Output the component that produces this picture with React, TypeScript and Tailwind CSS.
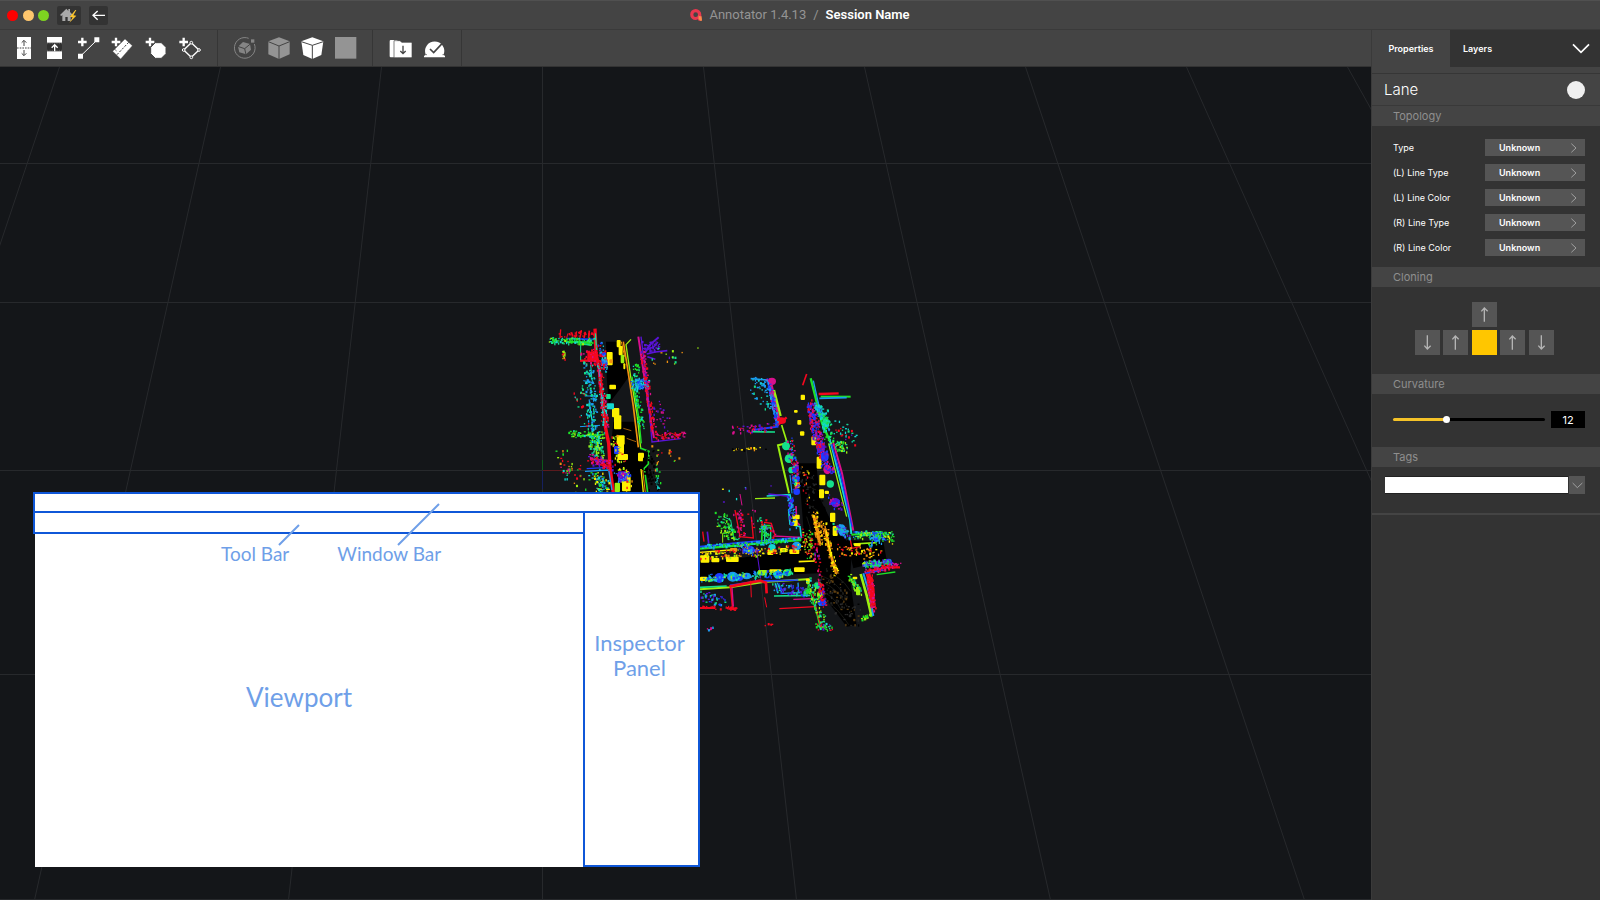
import { useState } from 'react';
import type { ReactNode } from 'react';

const RED = '#f5081e';
const MAGENTA = '#d8108c';
const PURPLE = '#5a14d8';
const BLUE = '#1c3cff';
const SKY = '#1a9cf0';
const CYAN = '#12d8d0';
const TEAL = '#14e08c';
const GREEN = '#1ee028';
const LIME = '#9cf010';
const YELLOW = '#fff000';
const ORANGE = '#f09010';

type Trail = {
  pts: number[][];
  colors: string[];
  spread: number;
  count: number;
};

type Line = [string, number, string];
type Block = [number, number, number, number, string];

// west street, 3 units per screen pixel
const westGround = [
  '228,95 285,95 300,195 268,240 236,282 230,200',
  '250,335 320,335 330,420 356,428 350,548 250,548 240,440',
];

const westLines: Line[] = [
  [RED, 10, '195,56 198,130 208,180 216,260 226,350 236,400 240,470 250,548'],
  [RED, 4, '92,58 90,84'],
  [RED, 3, '114,70 110,84'],
  [RED, 3, '128,72 126,84'],
  [RED, 4, '140,64 136,84'],
  [RED, 4, '154,60 150,84'],
  [RED, 5, '166,66 162,84'],
  [RED, 5, '178,62 176,84'],
  [RED, 7, '150,152 205,152'],
  [CYAN, 3, '205,160 214,250 222,340'],
  [BLUE, 5, '110,86 190,88'],
  [GREEN, 6, '108,95 186,97'],
  [TEAL, 6, '160,102 186,104'],
  [TEAL, 3, '152,100 152,150'],
  [TEAL, 4, '196,70 200,120'],
  [MAGENTA, 6, '180,448 234,452'],
  [SKY, 4, '165,484 236,480 246,540'],
  [BLUE, 4, '170,476 236,472'],
  [RED, 5, '200,462 240,470'],
  [CYAN, 3, '182,164 186,210 192,222'],
  [SKY, 3, '160,212 190,218'],
  [SKY, 3, '164,258 204,258'],
  [CYAN, 4, '178,280 186,330 196,330'],
  [SKY, 3, '150,350 210,346'],
  [GREEN, 4, '146,378 224,374'],
  [ORANGE, 5, '280,95 295,190 310,290 325,412'],
  [ORANGE, 3, '274,95 284,140'],
  [LIME, 4, '303,88 288,104 302,200 322,320 332,414'],
  [GREEN, 4, '306,200 326,320 334,400'],
  [GREEN, 5, '330,414 357,424 355,462 343,475 353,548'],
  [YELLOW, 4, '333,477 340,548'],
  [ORANGE, 3, '338,480 346,548'],
  [MAGENTA, 6, '325,80 340,180 352,260 362,330 372,384'],
  [PURPLE, 4, '333,80 352,230 366,396 452,386'],
  [RED, 3, '374,372 400,380 420,368 440,376 462,366'],
  [PURPLE, 6, '345,128 360,104 386,82'],
  [PURPLE, 4, '350,120 372,110 384,96'],
  [PURPLE, 5, '350,132 376,126 412,122'],
  [PURPLE, 5, '352,140 376,148'],
  [CYAN, 5, '380,508 384,536 390,534'],
  [ORANGE, 2, '280,355 304,362'],
  [ORANGE, 2, '290,385 318,395'],
];

const westBlocks: Block[] = [
  [230, 126, 18, 40, YELLOW],
  [238, 148, 10, 12, ORANGE],
  [238, 224, 20, 14, YELLOW],
  [246, 294, 22, 28, YELLOW],
  [252, 316, 22, 42, YELLOW],
  [260, 376, 24, 28, YELLOW],
  [264, 400, 18, 32, YELLOW],
  [262, 432, 32, 18, YELLOW],
  [324, 428, 18, 26, YELLOW],
  [260, 90, 12, 22, YELLOW],
  [266, 108, 12, 28, YELLOW],
  [272, 134, 11, 26, LIME],
  [280, 160, 6, 18, YELLOW],
  [276, 500, 26, 44, YELLOW],
  [254, 518, 16, 28, LIME],
  [172, 126, 30, 26, RED],
  [214, 126, 14, 12, BLUE],
  [214, 146, 18, 22, SKY],
  [228, 252, 14, 15, TEAL],
  [230, 280, 22, 18, CYAN],
  [264, 484, 24, 30, PURPLE],
  [252, 408, 16, 24, BLUE],
];

const westTrails: Trail[] = [
  { pts: [[60, 92], [190, 94]], colors: [GREEN, CYAN, TEAL, LIME], spread: 9, count: 90 },
  { pts: [[90, 75], [200, 70]], colors: [RED], spread: 8, count: 26 },
  { pts: [[170, 135], [206, 150]], colors: [RED, RED, MAGENTA], spread: 20, count: 60 },
  { pts: [[178, 170], [190, 360]], colors: [CYAN, SKY, TEAL, SKY], spread: 17, count: 120 },
  { pts: [[146, 220], [170, 340]], colors: [CYAN, TEAL, RED], spread: 18, count: 26 },
  { pts: [[208, 160], [226, 350]], colors: [RED, MAGENTA, CYAN, RED], spread: 9, count: 110 },
  { pts: [[120, 372], [225, 376]], colors: [GREEN, LIME, GREEN, CYAN], spread: 10, count: 70 },
  { pts: [[190, 380], [206, 440]], colors: [CYAN, TEAL, GREEN, LIME], spread: 18, count: 100 },
  { pts: [[180, 445], [245, 470]], colors: [MAGENTA, RED, PURPLE], spread: 14, count: 80 },
  { pts: [[190, 490], [226, 540]], colors: [CYAN, GREEN, YELLOW, SKY], spread: 18, count: 80 },
  { pts: [[96, 430], [150, 540]], colors: [LIME, GREEN, ORANGE, RED, CYAN], spread: 26, count: 34 },
  { pts: [[100, 126], [102, 150]], colors: [ORANGE, LIME, RED], spread: 4, count: 12 },
  { pts: [[210, 100], [226, 180]], colors: [CYAN, SKY, BLUE, RED], spread: 9, count: 50 },
  { pts: [[318, 160], [322, 260], [334, 350]], colors: [GREEN, CYAN, TEAL, GREEN], spread: 9, count: 80 },
  { pts: [[315, 225], [345, 222]], colors: [SKY, BLUE, SKY, CYAN], spread: 16, count: 90 },
  { pts: [[336, 120], [352, 230], [372, 370]], colors: [RED, MAGENTA, RED], spread: 7, count: 110 },
  { pts: [[380, 380], [460, 374]], colors: [RED, MAGENTA], spread: 10, count: 40 },
  { pts: [[374, 290], [408, 350]], colors: [PURPLE, MAGENTA], spread: 20, count: 24 },
  { pts: [[345, 110], [384, 110]], colors: [PURPLE], spread: 16, count: 40 },
  { pts: [[376, 142], [545, 120]], colors: [LIME, TEAL, PURPLE, ORANGE], spread: 30, count: 16 },
  { pts: [[380, 420], [440, 440]], colors: [ORANGE, LIME, GREEN, RED], spread: 20, count: 12 },
  { pts: [[378, 450], [386, 530]], colors: [CYAN, GREEN, ORANGE], spread: 7, count: 16 },
  { pts: [[246, 380], [300, 545]], colors: [YELLOW, LIME, ORANGE, RED], spread: 14, count: 60 },
  { pts: [[262, 500], [290, 500]], colors: [PURPLE, BLUE, SKY, MAGENTA], spread: 14, count: 50 },
  { pts: [[350, 425], [372, 540]], colors: ['#000000'], spread: 18, count: 60 },
  { pts: [[75, 460], [160, 490]], colors: [RED, MAGENTA], spread: 24, count: 10 },
];

// east street and the crossing below it
const eastGround = [
  '325,310 378,310 392,420 432,500 486,560 480,660 500,796 470,800 410,720 385,640 30,655 30,610 330,570 340,500',
  '470,540 580,545 590,600 490,625',
  '372,440 405,440 440,620 480,650 470,770 430,740 400,700',
];

const eastLines: Line[] = [
  [BLUE, 6, '232,55 262,200 190,210'],
  [MAGENTA, 7, '240,55 270,188'],
  [SKY, 5, '182,56 232,60'],
  [LIME, 7, '252,90 272,168'],
  [LIME, 5, '275,195 290,244'],
  [TEAL, 5, '185,215 255,216'],
  [RED, 7, '262,196 290,172'],
  [LIME, 6, '290,250 264,256 276,310 297,400'],
  [SKY, 3, '300,345 306,400'],
  [CYAN, 5, '230,408 300,404 306,440 296,450 300,492 330,500 334,535'],
  [LIME, 4, '195,416 255,414'],
  [PURPLE, 4, '235,402 292,408 308,430'],
  [MAGENTA, 5, '318,438 320,486 330,496'],
  [GREEN, 7, '362,55 376,110 396,190 420,244'],
  [SKY, 4, '370,62 394,170'],
  [RED, 7, '386,102 446,100'],
  [GREEN, 6, '392,110 482,110'],
  [SKY, 5, '388,115 470,113'],
  [CYAN, 6, '422,246 448,350 480,480 484,522'],
  [LIME, 4, '416,250 440,350 470,470'],
  [MAGENTA, 6, '430,248 456,340 490,512'],
  [BLUE, 4, '424,250 452,345 486,500'],
  [GREEN, 6, '484,524 575,516'],
  [BLUE, 5, '490,516 580,520'],
  [TEAL, 4, '495,530 550,524'],
  [RED, 4, '480,535 486,565 510,560'],
  [LIME, 5, '490,552 560,548'],
  [GREEN, 7, '30,566 150,556 240,546 334,540'],
  [BLUE, 5, '30,560 150,548 334,532'],
  [MAGENTA, 4, '250,528 334,532'],
  [YELLOW, 4, '30,577 120,570'],
  [RED, 4, '135,450 150,530 190,534 184,470'],
  [RED, 4, '222,487 244,490 256,530'],
  [GREEN, 5, '215,545 217,497 242,497'],
  [TEAL, 4, '224,545 224,505 242,503 242,535'],
  [LIME, 3, '98,548 98,520 118,516'],
  [TEAL, 3, '100,470 122,480 132,540'],
  [PURPLE, 5, '52,515 56,550'],
  [RED, 4, '38,515 42,545'],
  [LIME, 6, '30,688 120,682 220,666 350,658'],
  [TEAL, 5, '30,682 110,678'],
  [BLUE, 5, '120,676 200,664 325,660'],
  [RED, 8, '118,680 210,662 228,668 230,700'],
  [RED, 5, '122,682 128,745'],
  [MAGENTA, 4, '126,684 130,740'],
  [RED, 3, '182,662 184,712'],
  [RED, 3, '224,712 230,742'],
  [PURPLE, 3, '200,570 212,655'],
  [SKY, 4, '262,668 276,700 326,698 324,668'],
  [TEAL, 5, '252,708 360,706'],
  [CYAN, 5, '256,670 264,700'],
  [MAGENTA, 4, '310,718 370,716'],
  [RED, 4, '268,746 375,740'],
  [RED, 6, '30,744 76,744'],
  [RED, 7, '115,746 140,746'],
  [GREEN, 4, '350,658 362,700 380,760 392,808'],
  [RED, 3, '368,700 390,790'],
  [ORANGE, 9, '372,470 388,540'],
  [ORANGE, 8, '405,505 416,560 436,634'],
  [YELLOW, 4, '408,510 424,590'],
  [YELLOW, 5, '326,605 374,603'],
  [LIME, 8, '512,642 530,706 545,770'],
  [SKY, 6, '520,640 538,700 550,768'],
  [RED, 14, '534,640 546,690 548,735'],
  [RED, 7, '530,636 590,622 630,622'],
  [BLUE, 5, '524,640 580,630'],
  [GREEN, 4, '560,644 616,636'],
  [LIME, 4, '516,612 600,606'],
  [RED, 5, '350,42 338,76'],
  [MAGENTA, 3, '150,402 156,436'],
];

const eastBlocks: Block[] = [
  [332, 104, 13, 16, YELLOW],
  [322, 180, 12, 14, YELLOW],
  [330, 214, 13, 13, YELLOW],
  [312, 150, 11, 8, YELLOW],
  [364, 230, 15, 26, YELLOW],
  [380, 290, 15, 36, YELLOW],
  [388, 344, 18, 32, YELLOW],
  [387, 388, 15, 27, YELLOW],
  [404, 392, 13, 10, YELLOW],
  [420, 458, 16, 28, YELLOW],
  [428, 498, 15, 30, YELLOW],
  [307, 464, 22, 14, YELLOW],
  [308, 480, 15, 18, YELLOW],
  [314, 366, 15, 17, YELLOW],
  [32, 586, 26, 22, YELLOW],
  [64, 594, 24, 13, YELLOW],
  [108, 590, 38, 16, YELLOW],
  [120, 564, 22, 10, ORANGE],
  [232, 570, 18, 15, YELLOW],
  [270, 564, 20, 13, YELLOW],
  [298, 568, 30, 14, YELLOW],
  [204, 630, 28, 15, LIME],
  [238, 628, 36, 10, YELLOW],
  [312, 622, 32, 14, YELLOW],
  [30, 650, 22, 13, YELLOW],
  [348, 655, 12, 16, YELLOW],
  [498, 680, 13, 26, LIME],
  [488, 650, 14, 8, YELLOW],
  [492, 550, 20, 9, YELLOW],
  [518, 606, 14, 14, LIME],
];

const eastBlobs: Block[] = [
  [288, 258, 12, 13, TEAL],
  [297, 296, 13, 13, TEAL],
  [304, 330, 9, 10, TEAL],
  [317, 356, 12, 11, BLUE],
  [317, 325, 10, 14, PURPLE],
  [320, 395, 10, 10, BLUE],
  [412, 328, 12, 14, MAGENTA],
  [421, 372, 11, 11, TEAL],
  [436, 428, 13, 14, PURPLE],
  [456, 510, 12, 17, SKY],
  [404, 290, 12, 15, BLUE],
  [392, 262, 13, 17, PURPLE],
  [408, 190, 10, 18, TEAL],
  [88, 654, 15, 15, BLUE],
  [128, 650, 17, 15, SKY],
  [148, 652, 12, 11, BLUE],
  [170, 648, 13, 10, SKY],
  [60, 658, 9, 8, TEAL],
  [264, 644, 14, 12, SKY],
  [292, 638, 14, 11, TEAL],
  [180, 570, 14, 13, BLUE],
  [246, 562, 11, 10, CYAN],
  [320, 558, 14, 13, SKY],
  [384, 676, 12, 11, TEAL],
  [390, 704, 9, 11, LIME],
  [396, 728, 13, 10, BLUE],
  [350, 694, 8, 10, GREEN],
  [560, 534, 12, 11, SKY],
  [556, 612, 12, 10, TEAL],
  [596, 606, 10, 10, BLUE],
  [246, 64, 12, 11, MAGENTA],
  [274, 182, 14, 10, RED],
];

const eastTrails: Trail[] = [
  { pts: [[196, 58], [228, 70], [240, 140]], colors: [SKY, CYAN, SKY], spread: 10, count: 50 },
  { pts: [[190, 90], [220, 130]], colors: [CYAN, SKY, TEAL], spread: 22, count: 18 },
  { pts: [[236, 60], [262, 190]], colors: [BLUE, MAGENTA, SKY], spread: 6, count: 80 },
  { pts: [[135, 212], [262, 198]], colors: [RED, MAGENTA, PURPLE], spread: 13, count: 50 },
  { pts: [[124, 268], [235, 264]], colors: [ORANGE, YELLOW, '#000000'], spread: 4, count: 20 },
  { pts: [[296, 240], [314, 320], [322, 400]], colors: [RED, MAGENTA, BLUE, TEAL], spread: 11, count: 90 },
  { pts: [[364, 130], [376, 210], [400, 290]], colors: [MAGENTA, PURPLE, BLUE, RED], spread: 14, count: 250 },
  { pts: [[382, 130], [410, 210]], colors: [CYAN, SKY, TEAL], spread: 9, count: 80 },
  { pts: [[400, 150], [420, 240]], colors: [TEAL, GREEN, CYAN], spread: 16, count: 50 },
  { pts: [[430, 255], [470, 262]], colors: [TEAL, GREEN, LIME], spread: 15, count: 44 },
  { pts: [[440, 190], [485, 240]], colors: [TEAL, RED, CYAN, PURPLE], spread: 20, count: 30 },
  { pts: [[402, 310], [424, 335]], colors: [MAGENTA, PURPLE, BLUE], spread: 12, count: 36 },
  { pts: [[424, 415], [448, 440]], colors: [PURPLE, BLUE, MAGENTA], spread: 12, count: 40 },
  { pts: [[440, 500], [470, 525]], colors: [SKY, PURPLE, TEAL], spread: 12, count: 44 },
  { pts: [[346, 320], [350, 430]], colors: [ORANGE, RED, YELLOW], spread: 10, count: 16 },
  { pts: [[300, 410], [310, 500]], colors: [BLUE, SKY, PURPLE], spread: 10, count: 60 },
  { pts: [[92, 470], [130, 545]], colors: [GREEN, TEAL, LIME, GREEN], spread: 18, count: 70 },
  { pts: [[140, 450], [160, 530]], colors: [RED, MAGENTA], spread: 12, count: 36 },
  { pts: [[180, 460], [250, 520]], colors: [RED, TEAL, MAGENTA], spread: 20, count: 26 },
  { pts: [[218, 500], [240, 540]], colors: [TEAL, SKY, GREEN], spread: 12, count: 44 },
  { pts: [[40, 560], [180, 552], [330, 538]], colors: [SKY, CYAN, GREEN], spread: 6, count: 120 },
  { pts: [[32, 585], [180, 580], [340, 562]], colors: [YELLOW, ORANGE, RED, LIME], spread: 12, count: 120 },
  { pts: [[40, 655], [180, 646], [300, 638]], colors: [SKY, BLUE, CYAN, LIME, TEAL], spread: 11, count: 150 },
  { pts: [[150, 560], [200, 575]], colors: [PURPLE, SKY, BLUE, ORANGE], spread: 12, count: 50 },
  { pts: [[350, 520], [360, 590]], colors: [LIME, ORANGE, RED, GREEN], spread: 14, count: 60 },
  { pts: [[374, 460], [392, 560]], colors: [ORANGE, YELLOW, ORANGE], spread: 9, count: 70 },
  { pts: [[400, 490], [438, 640]], colors: [ORANGE, YELLOW, ORANGE], spread: 9, count: 80 },
  { pts: [[376, 550], [390, 660], [404, 740]], colors: [RED, PURPLE, MAGENTA, RED], spread: 8, count: 70 },
  { pts: [[356, 660], [400, 800]], colors: [GREEN, TEAL, LIME, CYAN], spread: 13, count: 80 },
  { pts: [[384, 800], [420, 804]], colors: [GREEN, TEAL, RED, PURPLE], spread: 9, count: 34 },
  { pts: [[446, 570], [560, 585]], colors: [ORANGE, RED, ORANGE, YELLOW], spread: 18, count: 60 },
  { pts: [[500, 525], [600, 525]], colors: [GREEN, SKY, TEAL, LIME], spread: 12, count: 70 },
  { pts: [[545, 548], [576, 528]], colors: [SKY, BLUE, GREEN], spread: 14, count: 50 },
  { pts: [[520, 612], [606, 606]], colors: [TEAL, SKY, GREEN, PURPLE], spread: 9, count: 100 },
  { pts: [[530, 634], [630, 614]], colors: [RED, MAGENTA], spread: 8, count: 56 },
  { pts: [[538, 650], [550, 745]], colors: [RED, RED, MAGENTA], spread: 9, count: 110 },
  { pts: [[595, 520], [610, 548]], colors: [GREEN, YELLOW], spread: 10, count: 16 },
  { pts: [[30, 705], [110, 730]], colors: [SKY, BLUE, PURPLE, TEAL], spread: 14, count: 44 },
  { pts: [[30, 744], [140, 746]], colors: [RED], spread: 7, count: 26 },
  { pts: [[480, 650], [510, 700]], colors: [LIME, TEAL, GREEN], spread: 9, count: 44 },
  { pts: [[515, 775], [550, 765]], colors: [GREEN, LIME], spread: 6, count: 20 },
  { pts: [[260, 680], [350, 700]], colors: [TEAL, SKY, PURPLE, BLUE], spread: 14, count: 80 },
  { pts: [[55, 808], [66, 804]], colors: [SKY, MAGENTA], spread: 4, count: 8 },
  { pts: [[215, 795], [255, 793]], colors: [RED], spread: 3, count: 5 },
  { pts: [[90, 410], [260, 365]], colors: [YELLOW, PURPLE, CYAN], spread: 20, count: 7 },
  { pts: [[400, 640], [490, 780]], colors: ['#242420', '#000000', '#2c2c2c', '#604010'], spread: 28, count: 120 },
  { pts: [[345, 330], [380, 450]], colors: ['#222426', '#000000'], spread: 22, count: 60 },
];

function random(seed: number) {
  let s = seed;
  return () => {
    s = (s * 16807) % 2147483647;
    return s / 2147483647;
  };
}

function scatter(trails: Trail[], seed: number) {
  const next = random(seed);
  return trails.flatMap(({ pts, colors, spread, count }) =>
    Array.from({ length: count }, () => {
      const at = next() * (pts.length - 1);
      const i = Math.min(Math.floor(at), pts.length - 2);
      const t = at - i;
      const [x1, y1] = pts[i];
      const [x2, y2] = pts[i + 1];
      return {
        x: x1 + (x2 - x1) * t + (next() * 2 - 1) * spread - 2,
        y: y1 + (y2 - y1) * t + (next() * 2 - 1) * spread - 2,
        w: next() > 0.6 ? 6 : 4,
        h: next() > 0.6 ? 7 : 4,
        fill: colors[Math.floor(next() * colors.length)],
      };
    })
  );
}

const westDots = scatter(westTrails, 4211);
const eastDots = scatter(eastTrails, 977);

function Lines({ lines }: { lines: Line[] }) {
  return (
    <>
      {lines.map(([color, width, points], i) => (
        <polyline key={i} points={points} stroke={color} strokeWidth={width} fill="none" />
      ))}
    </>
  );
}

function Blocks({ blocks }: { blocks: Block[] }) {
  return (
    <>
      {blocks.map(([x, y, w, h, fill], i) => (
        <rect key={i} x={x} y={y} width={w} height={h} rx={3} fill={fill} />
      ))}
    </>
  );
}

function Dots({ dots }: { dots: ReturnType<typeof scatter> }) {
  return (
    <>
      {dots.map((d, i) => (
        <rect key={i} x={d.x} y={d.y} width={d.w} height={d.h} fill={d.fill} />
      ))}
    </>
  );
}

function Scene() {
  return (
    <svg
      className="absolute inset-0 h-full w-full"
      viewBox="0 67 1371 833"
      preserveAspectRatio="xMinYMin slice"
      aria-hidden="true"
    >
      <g stroke="#27292c" strokeWidth="1">
        {[163.5, 302.5, 470.5, 674.5, 899.5].map((y) => (
          <line key={y} x1="0" x2="2400" y1={y} y2={y} />
        ))}
        {[-3, -2, -1, 0, 1, 2, 3, 4, 5, 6, 7, 8].map((k) => (
          <line key={k} x1={542.5 + k * 161} y1="67" x2={542.5 + k * 254} y2="900" />
        ))}
      </g>
      <path d="M542.5 460v10" stroke="#0d5a1c" />
      <path d="M543 470.5h20" stroke="#5a1a1e" />
      <path d="M542.5 471v18" stroke="#16205e" />

      <g transform="translate(530 310) scale(0.33333)">
        {westGround.map((points) => (
          <polygon key={points} points={points} fill="#000" />
        ))}
        <Lines lines={westLines} />
        <Blocks blocks={westBlocks} />
        <Dots dots={westDots} />
      </g>

      <g transform="translate(690 360) scale(0.33333)">
        {eastGround.map((points) => (
          <polygon key={points} points={points} fill="#000" />
        ))}
        <g stroke="#24251f" strokeWidth="2" fill="none">
          <path d="M400 650q30 10 60 50M405 670q30 14 56 52M408 700q26 14 46 50M430 740q20 16 46 54M336 340q16 12 36 18M338 370q18 12 40 20M345 430q20 8 40 24M440 650q24 14 42 44M350 470q12 30 14 60" />
        </g>
        <Lines lines={eastLines} />
        <Blocks blocks={eastBlocks} />
        {eastBlobs.map(([cx, cy, rx, ry, fill], i) => (
          <ellipse key={i} cx={cx} cy={cy} rx={rx} ry={ry} fill={fill} />
        ))}
        <Dots dots={eastDots} />
      </g>
    </svg>
  );
}

function ToolButton({ label, children }: { label: string; children: ReactNode }) {
  return (
    <button type="button" aria-label={label} className="flex h-full w-[33px] items-center justify-center">
      <svg className="h-6 w-[33px]" viewBox="0 0 99 72" fill="#fff">
        {children}
      </svg>
    </button>
  );
}

function Plus({ x }: { x: number }) {
  return <path d={`M${x - 13} 18h26M${x} 5v26`} stroke="#fff" strokeWidth="7" fill="none" />;
}

function WindowBar() {
  return (
    <header className="flex h-[30px] shrink-0 items-center border-t border-b border-t-[#505050] border-b-[#3a3a3a] bg-[#444]">
      <div className="flex flex-1 items-center">
        <div className="flex gap-1 pl-[7px]">
          <button type="button" aria-label="Close" className="h-[11px] w-[11px] rounded-full bg-[#fe0000]" />
          <button type="button" aria-label="Minimize" className="ml-px h-[11px] w-[11px] rounded-full bg-[#fdc66d]" />
          <button type="button" aria-label="Zoom" className="h-[11px] w-[11px] rounded-full bg-[#7ed321]" />
        </div>
        <button type="button" aria-label="Home" className="ml-2 rounded-xs bg-[#333]">
          <svg className="h-[19px] w-6" viewBox="0 0 72 57">
            <path d="M28 8 9 27l4 3 3-3v18h9V33h7v12h9V27l4 3 3-3-9-9V9h-5v6z" fill="#a9a9a9" />
            <path d="M55 12 38 33l9 1-10 16 21-21-9-1 9-16z" fill="#fdc62f" />
          </svg>
        </button>
        <button type="button" aria-label="Back" className="ml-2 rounded-xs bg-[#333]">
          <svg className="h-[19px] w-[19px]" viewBox="0 0 57 57" fill="none" stroke="#fff" strokeWidth="4">
            <path d="M48 28H13M26 15 12 28l14 13" />
          </svg>
        </button>
      </div>
      <h1 className="flex items-center font-[Roboto,sans-serif] text-[13px]">
        <svg className="mr-[7px] h-3 w-3" viewBox="0 0 36 36" aria-hidden="true">
          <path
            fillRule="evenodd"
            d="M17 0a17 17 0 0 1 17 17v18h-8l-3-4a15 15 0 0 1-6 2A16 16 0 0 1 17 0zm0 10a7 7 0 1 0 0 14 7 7 0 0 0 0-14z"
            fill="#e8384f"
          />
          <path d="M24 19c2 3 2 6 1 9l5 7h6c0-6-1-10-2-14-3 2-7 1-10-2z" fill="#fb8a4c" />
        </svg>
        <span className="text-[#949494]">Annotator 1.4.13</span>
        <span className="mx-[7px] text-[#949494]">/</span>
        <span className="font-semibold text-white">Session Name</span>
      </h1>
      <div className="flex-1" />
    </header>
  );
}

function ToolBar() {
  return (
    <div className="flex h-[37px] shrink-0 border-b border-[#333] bg-[#444]">
      <div className="flex border-r border-[#363636] pr-[11px] pl-2">
        <ToolButton label="Lane both ways">
          <path d="M27 3h42v66H27z" />
          <path d="M27 36h42" stroke="#444" strokeWidth="3" strokeDasharray="5 3" />
          <path d="M48 30V14M41 20l7-7 7 7M48 42v16M41 52l7 7 7-7" stroke="#444" strokeWidth="3" fill="none" />
        </ToolButton>
        <ToolButton label="Lane one way">
          <path d="M18 3h45v66H18z" />
          <path d="M18 20h45v26H18z" fill="#303030" />
          <path d="M18 23h45M18 43h45" stroke="#777" strokeWidth="2" strokeDasharray="4 3" />
          <path d="M41 46V27M32 35l9-9 9 9" stroke="#fff" strokeWidth="4" fill="none" />
        </ToolButton>
        <ToolButton label="Add line">
          <Plus x={25} />
          <path d="M20 60 69 12" stroke="#fff" strokeWidth="3" />
          <path d="M61 4h15v15H61zM12 53h15v15H12z" />
        </ToolButton>
        <ToolButton label="Add road">
          <Plus x={27} />
          <path d="M54 9 76 29 41 69 17 46z" stroke="#444" strokeWidth="1" />
          <path d="M65 19 29 57" stroke="#444" strokeWidth="3" strokeDasharray="7 4" />
          <path d="m21 38 8 7M63 43l6 6" stroke="#444" strokeWidth="2" />
        </ToolButton>
        <ToolButton label="Add area">
          <Plus x={30} />
          <path
            d="m46 20 18 0 14 14v19L64 67H46L32 53V34z"
            stroke="#444"
            strokeWidth="3"
            strokeLinejoin="round"
          />
        </ToolButton>
        <ToolButton label="Add polygon">
          <Plus x={32} />
          <path d="m55 20 23 22-23 22-23-22z" fill="none" stroke="#fff" strokeWidth="4" />
          <g fill="#444" stroke="#fff" strokeWidth="3">
            <circle cx="55" cy="20" r="4" />
            <circle cx="78" cy="42" r="4" />
            <circle cx="55" cy="64" r="4" />
            <circle cx="32" cy="42" r="4" />
          </g>
        </ToolButton>
      </div>
      <div className="flex border-r border-[#363636] pr-3 pl-[10px]">
        <ToolButton label="Orbit">
          <path d="M62 7A31 31 0 1 0 79 24" fill="none" stroke="#858585" strokeWidth="3" />
          <path d="M69 10h10v10H69z" fill="#858585" />
          <path d="m45 18 21 6 3 17-15 14-20-6-4-17z" fill="#858585" />
          <path d="m29 31 21 7 17-14M50 38l4 18" fill="none" stroke="#444" strokeWidth="3" />
        </ToolButton>
        <ToolButton label="Solid cube">
          <path d="m54 4 32 12v39L54 69 22 55V16z" fill="#949494" />
          <path d="m22 17 32 13 32-13M54 30v39" fill="none" stroke="#444" strokeWidth="3" />
        </ToolButton>
        <ToolButton label="Perspective">
          <path d="m55 4 33 12-6 41-27 12-27-12-6-41z" />
          <path d="m22 17 33 11 33-11M55 28v41" fill="none" stroke="#444" strokeWidth="3" />
        </ToolButton>
        <ToolButton label="Flat">
          <path d="M24 3h64v65H24z" fill="#949494" />
        </ToolButton>
      </div>
      <div className="flex border-r border-[#363636] px-[11px]">
        <ToolButton label="Import">
          <path d="M20 12h19l3 4v48H20q-3 0-3-3V15q0-3 3-3z" />
          <path d="M30 14h18l5 5h28q3 0 3 3v40q0 3-3 3H30z" stroke="#444" strokeWidth="2" />
          <path d="M57 29v23M49 45l8 8 8-8" fill="none" stroke="#444" strokeWidth="4" />
        </ToolButton>
        <ToolButton label="Validate">
          <path d="M26 56a29 29 0 1 1 54 0l4 4v4H21v-4z" />
          <path d="m39 39 11 11 25-27" fill="none" stroke="#444" strokeWidth="5" />
          <path d="M26 56h3M77 56h3" stroke="#444" strokeWidth="3" />
        </ToolButton>
      </div>
    </div>
  );
}

// miniature of the window that names its four areas
function LayoutGuide() {
  return (
    <div className="absolute bottom-[33px] left-[33px] flex h-[375px] w-[667px] flex-col font-[Lato,sans-serif] text-[#6f9fe8]">
      <div className="h-[21px] border-2 border-[#0f57d8] bg-white" />
      <div className="flex flex-1">
        <div className="flex flex-1 flex-col">
          <div className="h-[21px] border-b-2 border-l-2 border-[#0f57d8] bg-white" />
          <div className="ml-[2px] flex flex-1 flex-col bg-white">
            <div className="flex gap-12 pt-2 pl-[186px] text-[19px] leading-6">
              <span>Tool Bar</span>
              <span>Window Bar</span>
            </div>
            <p className="mt-[115px] pr-5 text-center text-[26px] leading-8">Viewport</p>
          </div>
        </div>
        <div className="w-[117px] border-r-2 border-b-2 border-l-2 border-[#0f57d8] bg-white pt-[117px] pr-1 text-center text-[22px] leading-[25px]">
          Inspector
          <br />
          Panel
        </div>
      </div>
      <svg className="absolute top-0 left-0 h-16 w-[440px]" viewBox="0 0 440 64" aria-hidden="true">
        <path d="m266 33-20 20M406 12l-41 41" stroke="#6f9fe8" strokeWidth="2" />
      </svg>
    </div>
  );
}

function SectionTitle({ children }: { children: ReactNode }) {
  return <h3 className="h-5 bg-[#444] pl-[21px] text-[11px] leading-5 text-[#8f8f8f]">{children}</h3>;
}

const topology = ['Type', '(L) Line Type', '(L) Line Color', '(R) Line Type', '(R) Line Color'];

function CloneButton({ dir }: { dir: 'up' | 'down' }) {
  return (
    <button
      type="button"
      aria-label={dir === 'up' ? 'Clone forward' : 'Clone reversed'}
      className="flex h-[25px] w-[25px] items-center justify-center bg-[#555]"
    >
      <svg className="h-[15px] w-[9px]" viewBox="0 0 27 45" fill="none" stroke="#b4b4b4" strokeWidth="4">
        {dir === 'up' ? <path d="M13 44V3M4 13l9-10 10 10" /> : <path d="M13 1v41M4 32l9 10 10-10" />}
      </svg>
    </button>
  );
}

function Inspector() {
  const [curvature, setCurvature] = useState(12);
  const [tags, setTags] = useState('');
  const fill = (curvature / 35) * 100;

  return (
    <aside className="flex w-[229px] shrink-0 flex-col border-l border-[#3a3a3a] bg-[#333] font-[Inter,sans-serif] text-white">
      <div className="flex h-[37px] shrink-0 text-[9px] font-semibold" role="tablist">
        <button type="button" role="tab" aria-selected="true" className="w-[78px] bg-[#444]">
          Properties
        </button>
        <button type="button" role="tab" aria-selected="false" className="pl-[13px]">
          Layers
        </button>
        <button type="button" aria-label="Collapse" className="mr-[10px] ml-auto">
          <svg className="h-[11px] w-[18px]" viewBox="0 0 54 33" fill="none" stroke="#fff" strokeWidth="5">
            <path d="m3 4 24 24L51 4" />
          </svg>
        </button>
      </div>
      <div className="h-[7px] border-b border-[#363636] bg-[#444]" />
      <div className="flex h-8 items-center justify-between border-b border-[#393939] bg-[#444] pr-[15px] pl-3">
        <h2 className="pt-[2px] text-[15px] font-light">Lane</h2>
        <button type="button" aria-label="Lane color" className="h-[18px] w-[18px] rounded-full bg-[#efefef]" />
      </div>

      <SectionTitle>Topology</SectionTitle>
      <div className="flex flex-col gap-2 pt-[13px] pr-[15px] pb-[11px] pl-[21px]">
        {topology.map((name, i) => (
          <div key={name} className="flex items-center justify-between">
            <label htmlFor={`topology-${i}`} className="text-[9px] leading-[17px]">
              {name}
            </label>
            <div className="relative flex">
              <select
                id={`topology-${i}`}
                className="h-[17px] w-[100px] appearance-none bg-[#555] pl-[14px] text-[9px] font-semibold"
              >
                <option>Unknown</option>
              </select>
              <svg
                className="pointer-events-none absolute top-1 right-2 h-[10px] w-[7px]"
                viewBox="0 0 21 30"
                fill="none"
                stroke="#a0a0a0"
                strokeWidth="3"
              >
                <path d="m4 2 14 13L4 28" />
              </svg>
            </div>
          </div>
        ))}
      </div>

      <SectionTitle>Cloning</SectionTitle>
      <div className="flex flex-col items-center gap-[3px] pt-[15px] pr-1 pb-[19px]">
        <CloneButton dir="up" />
        <div className="flex w-[139px] justify-between">
          <CloneButton dir="down" />
          <CloneButton dir="up" />
          <div className="h-[25px] w-[25px] bg-[#ffc600]" />
          <CloneButton dir="up" />
          <CloneButton dir="down" />
        </div>
      </div>

      <SectionTitle>Curvature</SectionTitle>
      <div className="flex items-center gap-[6px] pt-[17px] pr-[15px] pb-[19px] pl-[21px]">
        <input
          type="range"
          aria-label="Curvature"
          min={0}
          max={35}
          value={curvature}
          onChange={(e) => setCurvature(Number(e.target.value))}
          className="h-[3px] min-w-0 flex-1 appearance-none rounded-full [&::-webkit-slider-thumb]:h-[7px] [&::-webkit-slider-thumb]:w-[7px] [&::-webkit-slider-thumb]:appearance-none [&::-webkit-slider-thumb]:rounded-full [&::-webkit-slider-thumb]:bg-white"
          style={{ background: `linear-gradient(to right, #f5c328 ${fill}%, #000 ${fill}%)` }}
        />
        <input
          type="text"
          aria-label="Curvature value"
          value={curvature}
          onChange={(e) => setCurvature(Number(e.target.value) || 0)}
          className="h-[17px] w-[34px] bg-black text-center text-[11px]"
        />
      </div>

      <SectionTitle>Tags</SectionTitle>
      <div className="flex border-b-2 border-[#444] pt-[9px] pr-[15px] pb-[19px] pl-[13px]">
        <input
          type="text"
          aria-label="Tags"
          value={tags}
          onChange={(e) => setTags(e.target.value)}
          className="h-[18px] min-w-0 flex-1 border-y border-[#222] bg-white px-1 text-[10px] text-black"
        />
        <button type="button" aria-label="Show tags" className="ml-px flex w-4 items-center justify-center bg-[#555]">
          <svg className="h-[7px] w-[11px]" viewBox="0 0 33 21" fill="none" stroke="#a0a0a0" strokeWidth="3">
            <path d="m2 3 14 14L31 3" />
          </svg>
        </button>
      </div>
    </aside>
  );
}

export default function App() {
  return (
    <div className="flex h-screen flex-col overflow-hidden bg-[#141619]">
      <WindowBar />
      <div className="flex min-h-0 flex-1">
        <div className="flex min-w-0 flex-1 flex-col">
          <ToolBar />
          <main className="relative flex-1 overflow-hidden">
            <Scene />
            <LayoutGuide />
          </main>
        </div>
        <Inspector />
      </div>
    </div>
  );
}
